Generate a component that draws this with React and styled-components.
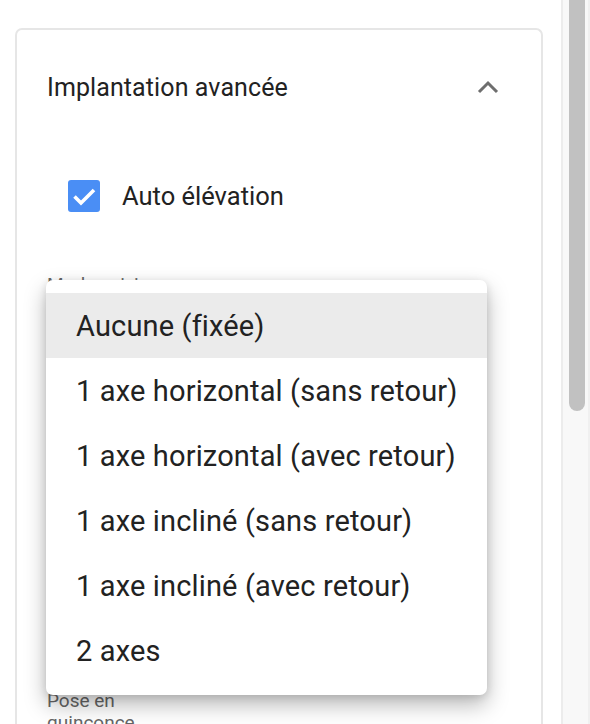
import React from 'react';
import styled, { createGlobalStyle } from 'styled-components';

const GlobalStyle = createGlobalStyle`
  html, body {
    margin: 0;
    padding: 0;
    background: #ffffff;
    overflow: hidden;
  }
  body {
    font-family: Roboto, "Liberation Sans", sans-serif;
    color: #222222;
  }
`;

const Page = styled.div`
  display: flex;
  width: 590px;
  height: 724px;
  overflow: hidden;
`;

const Main = styled.div`
  width: 561px;
  padding: 28px 18px 0 15px;
  box-sizing: border-box;
`;

const ScrollTrack = styled.div`
  flex: 1;
  background: #f8f8f8;
  border-left: 2px solid #ececec;
  border-right: 2px solid #f0f0f0;
  padding: 0 3px 0 6px;
`;

const ScrollThumb = styled.div`
  width: 16px;
  height: 411px;
  background: #c1c1c1;
  border-radius: 0 0 8px 8px;
`;

const Card = styled.div`
  position: relative;
  border: 2px solid #e6e6e6;
  border-bottom: none;
  border-radius: 7px 7px 0 0;
  height: 720px;
  box-sizing: border-box;
`;

const Header = styled.div`
  display: flex;
  align-items: center;
  justify-content: space-between;
  height: 114px;
  padding: 0 42px 0 30px;
`;

const Title = styled.div`
  font-size: 25px;
  color: #222222;
  letter-spacing: 0.1px;
`;

const Body = styled.div`
  padding: 0 0 0 30px;
`;

const CheckRow = styled.label`
  display: flex;
  align-items: center;
  gap: 22px;
  height: 48px;
  margin: 28px 0 0 21px;
  font-size: 25.5px;
  color: #222222;
`;

const Box = styled.span`
  width: 32px;
  height: 32px;
  border-radius: 3px;
  background: #4a8ef5;
  display: flex;
  align-items: center;
  justify-content: center;
`;

const FieldLabel = styled.div`
  font-size: 19px;
  line-height: 22px;
  color: #666666;
  width: ${(p) => p.$width || 'auto'};
  margin-top: ${(p) => p.$top || 0}px;
`;

const Menu = styled.ul`
  position: absolute;
  left: 29px;
  top: 250px;
  width: 441px;
  margin: 0;
  padding: 13px 0 12px;
  list-style: none;
  background: #ffffff;
  border-radius: 7px;
  box-shadow: 0 10px 22px rgba(0, 0, 0, 0.28), 0 2px 8px rgba(0, 0, 0, 0.12);
`;

const Item = styled.li`
  height: 65px;
  display: flex;
  align-items: center;
  padding-left: 30px;
  font-size: 29px;
  letter-spacing: 0.15px;
  color: #222222;
  background: ${(p) => (p.$selected ? '#ebebeb' : 'transparent')};
`;

const options = [
  'Aucune (fixée)',
  '1 axe horizontal (sans retour)',
  '1 axe horizontal (avec retour)',
  '1 axe incliné (sans retour)',
  '1 axe incliné (avec retour)',
  '2 axes',
];

export default function App() {
  return (
    <Page>
      <GlobalStyle />
      <Main>
        <Card>
          <Header>
            <Title>Implantation avancée</Title>
            <svg width="22" height="14" viewBox="0 0 22 14">
              <path d="M2 12 L11 3 L20 12" fill="none" stroke="#6e6e6e" strokeWidth="3" />
            </svg>
          </Header>
          <Body>
            <CheckRow>
              <Box>
                <svg width="28" height="28" viewBox="0 0 28 28">
                  <path d="M4.5 14.5 L11 21 L24 8" fill="none" stroke="#ffffff" strokeWidth="3.6" />
                </svg>
              </Box>
              Auto élévation
            </CheckRow>
            <FieldLabel $top={54}>Mode suivi</FieldLabel>
            <FieldLabel $top={394} $width="100px">Pose en quinconce</FieldLabel>
          </Body>
          <Menu>
            {options.map((o, i) => (
              <Item key={o} $selected={i === 0}>{o}</Item>
            ))}
          </Menu>
        </Card>
      </Main>
      <ScrollTrack>
        <ScrollThumb />
      </ScrollTrack>
    </Page>
  );
}
